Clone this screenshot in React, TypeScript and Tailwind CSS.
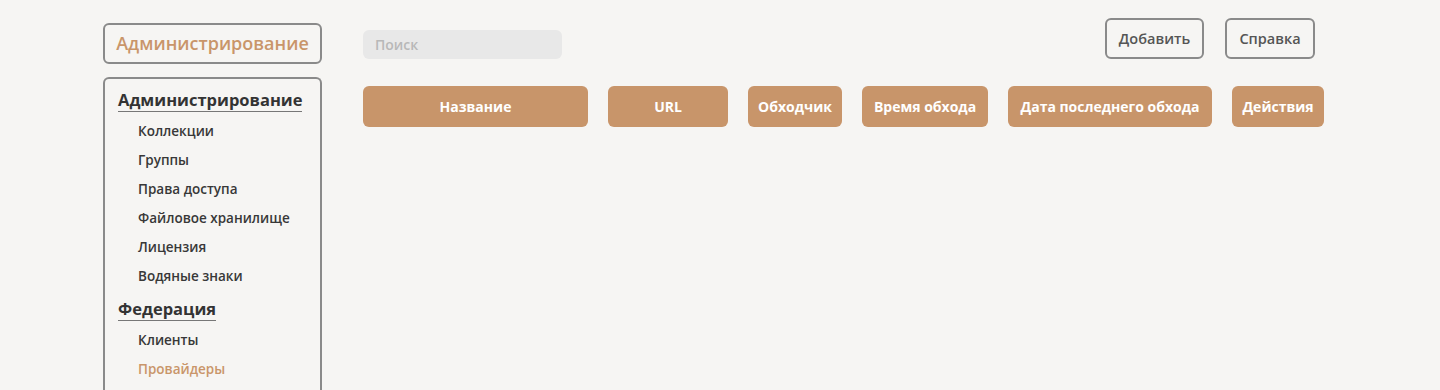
import React from "react";

const font = { fontFamily: '"Open Sans", "Noto Sans", sans-serif' };

function NavHeading({ children, pt }: { children: React.ReactNode; pt: string }) {
  return (
    <div className={`pl-[13px] ${pt} pb-[5px]`}>
      <span className="inline-block text-[16.5px] font-bold leading-[20px] text-[#333333] border-b border-[#777777] pb-[1px]">
        {children}
      </span>
    </div>
  );
}

function NavItem({ children, active }: { children: React.ReactNode; active?: boolean }) {
  return (
    <div
      className={`pl-[33px] h-[29px] flex items-center text-[13.5px] font-semibold ${
        active ? "text-[#c9956a]" : "text-[#383838]"
      }`}
    >
      {children}
    </div>
  );
}

function Header({ children, w }: { children: React.ReactNode; w: string }) {
  return (
    <div
      className={`${w} h-[41px] rounded-[6px] bg-[#c8956a] text-white text-[14px] font-bold flex items-center justify-center px-[10px] whitespace-nowrap`}
    >
      {children}
    </div>
  );
}

export default function App() {
  return (
    <div className="min-h-[390px] bg-[#f6f5f3] overflow-hidden" style={font}>
      <div className="flex pl-[103px] pt-[18px] gap-[41px]">
        <div className="w-[219px] flex flex-col gap-[13px] pt-[5px]">
          <div className="h-[41px] border-2 border-[#8a8a8a] rounded-[6px] flex items-center justify-center text-[18px] font-semibold text-[#c9956a]">
            Администрирование
          </div>
          <div className="border-2 border-b-0 border-[#8a8a8a] rounded-t-[6px] h-[320px] pt-[2px]">
            <NavHeading pt="pt-[7px]">Администрирование</NavHeading>
            <NavItem>Коллекции</NavItem>
            <NavItem>Группы</NavItem>
            <NavItem>Права доступа</NavItem>
            <NavItem>Файловое хранилище</NavItem>
            <NavItem>Лицензия</NavItem>
            <NavItem>Водяные знаки</NavItem>
            <NavHeading pt="pt-[6px]">Федерация</NavHeading>
            <NavItem>Клиенты</NavItem>
            <NavItem active>Провайдеры</NavItem>
          </div>
        </div>
        <div className="flex flex-col">
          <div className="flex items-end justify-between w-[952px]">
            <div className="w-[199px] h-[29px] rounded-[6px] bg-[#e8e8e8] flex items-center pl-[12px] text-[14px] font-semibold text-[#b8b8b8]">
              Поиск
            </div>
            <div className="flex gap-[21px]">
              <div className="w-[99px] h-[41px] border-2 border-[#8a8a8a] rounded-[6px] flex items-center justify-center text-[14.5px] font-semibold text-[#555555]">
                Добавить
              </div>
              <div className="w-[90px] h-[41px] border-2 border-[#8a8a8a] rounded-[6px] flex items-center justify-center text-[14.5px] font-semibold text-[#555555]">
                Справка
              </div>
            </div>
          </div>
          <div className="flex gap-[20px] mt-[27px]">
            <Header w="w-[225px]">Название</Header>
            <Header w="w-[120px]">URL</Header>
            <Header w="w-[94px]">Обходчик</Header>
            <Header w="w-[126px]">Время обхода</Header>
            <Header w="w-[204px]">Дата последнего обхода</Header>
            <Header w="w-[92px]">Действия</Header>
          </div>
        </div>
      </div>
    </div>
  );
}
